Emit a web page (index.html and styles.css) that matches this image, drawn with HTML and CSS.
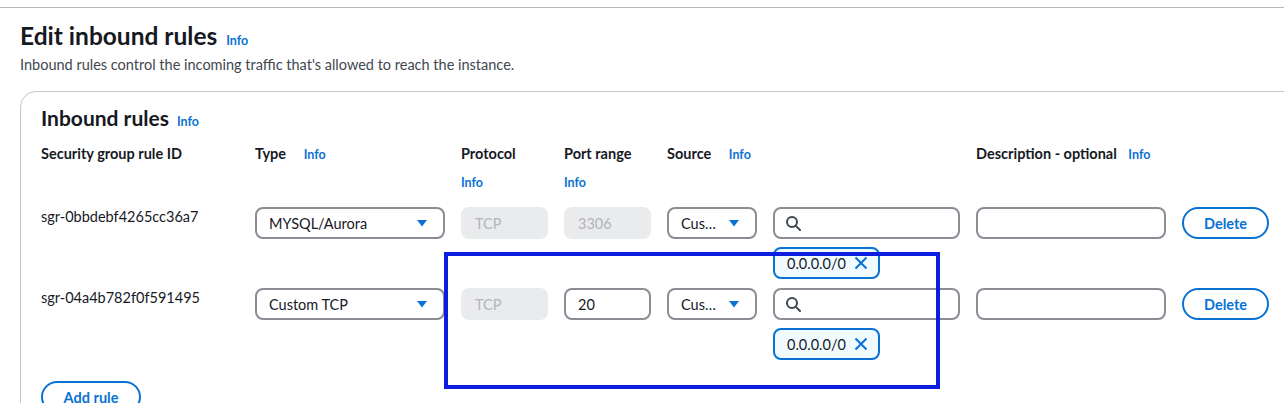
FILE: index.html
```html
<!DOCTYPE html>
<html lang="en">
<head>
<meta charset="utf-8">
<title>Edit inbound rules</title>
<link rel="stylesheet" href="styles.css">
</head>
<body>
<div class="topline"></div>
<header class="page-head">
  <h1 class="title">Edit inbound rules <a class="info">Info</a></h1>
  <p class="subtitle">Inbound rules control the incoming traffic that's allowed to reach the instance.</p>
</header>
<section class="panel">
  <h2 class="panel-title">Inbound rules <a class="info">Info</a></h2>
  <div class="grid head">
    <div class="th">Security group rule ID</div>
    <div class="th">Type <a class="info gap16">Info</a></div>
    <div class="th">Protocol<a class="info block">Info</a></div>
    <div class="th">Port range<a class="info block">Info</a></div>
    <div class="th nowrap">Source <a class="info gap17">Info</a></div>
    <div class="th"></div>
    <div class="th nowrap">Description - optional <a class="info gap9">Info</a></div>
    <div class="th"></div>
  </div>

  <div class="grid row">
    <div class="rid">sgr-0bbdebf4265cc36a7</div>
    <div class="select"><span>MYSQL/Aurora</span><svg class="caret" width="12" height="8" viewBox="0 0 12 8"><polygon points="1,1 11,1 6,7.5" fill="#0972d3"/></svg></div>
    <div class="field disabled">TCP</div>
    <div class="field disabled">3306</div>
    <div class="select"><span>Cus…</span><svg class="caret" width="12" height="8" viewBox="0 0 12 8"><polygon points="1,1 11,1 6,7.5" fill="#0972d3"/></svg></div>
    <div class="stack">
      <div class="field search"><svg width="16" height="16" viewBox="0 0 16 16"><circle cx="7" cy="7" r="5" fill="none" stroke="#414750" stroke-width="2"/><line x1="10.6" y1="10.6" x2="15" y2="15" stroke="#414750" stroke-width="2" stroke-linecap="round"/></svg></div>
      <div class="token"><span>0.0.0.0/0</span><svg width="14" height="14" viewBox="0 0 14 14"><path d="M1.5 1.5 L12.5 12.5 M12.5 1.5 L1.5 12.5" stroke="#0972d3" stroke-width="2" fill="none"/></svg></div>
    </div>
    <div class="field"></div>
    <button class="btn">Delete</button>
  </div>

  <div class="grid row row2">
    <div class="rid">sgr-04a4b782f0f591495</div>
    <div class="select"><span>Custom TCP</span><svg class="caret" width="12" height="8" viewBox="0 0 12 8"><polygon points="1,1 11,1 6,7.5" fill="#0972d3"/></svg></div>
    <div class="field disabled">TCP</div>
    <div class="field">20</div>
    <div class="select"><span>Cus…</span><svg class="caret" width="12" height="8" viewBox="0 0 12 8"><polygon points="1,1 11,1 6,7.5" fill="#0972d3"/></svg></div>
    <div class="stack">
      <div class="field search"><svg width="16" height="16" viewBox="0 0 16 16"><circle cx="7" cy="7" r="5" fill="none" stroke="#414750" stroke-width="2"/><line x1="10.6" y1="10.6" x2="15" y2="15" stroke="#414750" stroke-width="2" stroke-linecap="round"/></svg></div>
      <div class="token"><span>0.0.0.0/0</span><svg width="14" height="14" viewBox="0 0 14 14"><path d="M1.5 1.5 L12.5 12.5 M12.5 1.5 L1.5 12.5" stroke="#0972d3" stroke-width="2" fill="none"/></svg></div>
    </div>
    <div class="field"></div>
    <button class="btn">Delete</button>
  </div>

  <button class="btn add">Add rule</button>
</section>
<div class="annotation"></div>
</body>
</html>
```
FILE: styles.css
```css
* { box-sizing: border-box; }
html, body { margin: 0; padding: 0; }
body {
  font-family: Lato, "Open Sans", sans-serif;
  color: #16191f;
  background: #fff;
  width: 1284px;
  height: 403px;
  overflow: hidden;
  position: relative;
}
.topline { height: 8px; border-bottom: 1px solid #b8b8b8; }
.page-head { padding: 13px 20px 0; }
.title {
  margin: 0;
  font-size: 24.5px;
  line-height: 30px;
  font-weight: 700;
  display: flex;
  align-items: baseline;
  gap: 9px;
}
.info { color: #0972d3; font-size: 12.5px; font-weight: 700; line-height: 20px; }
.subtitle { margin: 4px 0 0; font-size: 14.5px; line-height: 20px; color: #414750; }
.panel {
  margin: 16px 0 0 20px;
  width: 1320px;
  height: 400px;
  border: 1px solid #c6c6cd;
  border-radius: 16px;
  padding: 14px 20px 20px;
}
.panel-title {
  margin: 0;
  font-size: 21px;
  line-height: 24px;
  font-weight: 700;
  display: flex;
  align-items: baseline;
  gap: 8px;
}
.grid {
  display: grid;
  grid-template-columns: 198px 190px 87px 87px 90px 187px 190px 87px;
  column-gap: 16px;
  align-items: start;
}
.head { margin-top: 12px; }
.th { font-size: 14.5px; line-height: 20px; font-weight: 700; }
.nowrap { white-space: nowrap; }
.th .block { display: block; margin-top: 9px; }
.gap16 { margin-left: 14px; }
.gap17 { margin-left: 14px; }
.gap9 { margin-left: 8px; }
.row { margin-top: 14px; }
.row2 { margin-top: 9px; }
.rid { font-size: 14.5px; line-height: 20px; padding-top: 0; }
.select, .field {
  height: 32px;
  border: 2px solid #8c8c94;
  border-radius: 8px;
  font-size: 14.5px;
  display: flex;
  align-items: center;
}
.select { justify-content: space-between; padding: 0 15px 0 12px; }
.field { padding: 0 12px; }
.field.disabled { border: none; background: #e9ebed; color: #b4b4bb; padding-left: 14px; }
.search { padding-left: 10px; }
.stack { display: flex; flex-direction: column; align-items: flex-start; gap: 8px; }
.stack .search { width: 100%; }
.token {
  height: 32px;
  width: 107px;
  border: 2px solid #0972d3;
  border-radius: 8px;
  background: #f0fbff;
  font-size: 14.5px;
  display: flex;
  align-items: center;
  justify-content: space-between;
  padding: 0 10px 0 12px;
}
.btn {
  height: 32px;
  border: 2px solid #0972d3;
  border-radius: 20px;
  background: #fff;
  color: #0972d3;
  font-family: inherit;
  font-size: 14.5px;
  font-weight: 700;
  padding: 0;
  cursor: pointer;
}
.add { width: 100px; margin-top: 21px; }
.annotation {
  position: absolute;
  left: 444px;
  top: 252px;
  width: 496px;
  height: 137px;
  border: 4px solid #0b1de0;
}
```
